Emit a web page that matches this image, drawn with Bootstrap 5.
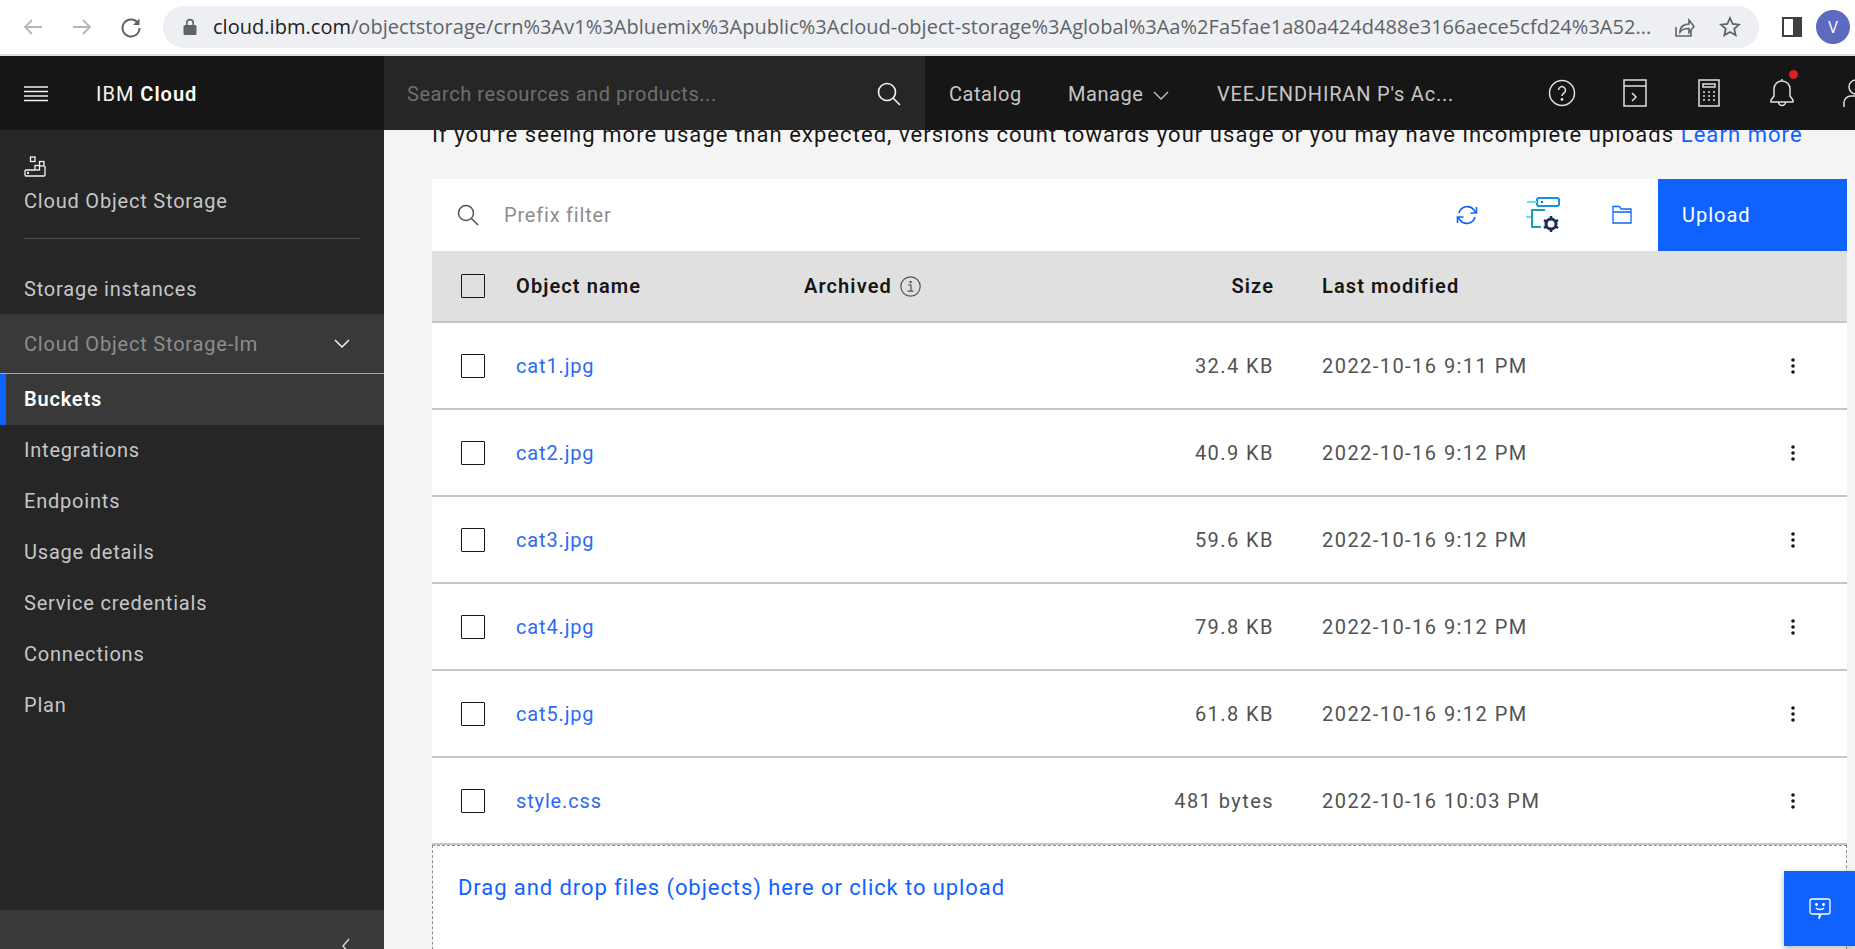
<!DOCTYPE html>
<html lang="en">
<head>
<meta charset="utf-8">
<title>IBM Cloud</title>
<link href="https://cdn.jsdelivr.net/npm/bootstrap@5.3.0/dist/css/bootstrap.min.css" rel="stylesheet">
<style>
html,body{height:100%;}
body{width:1855px;height:949px;overflow:hidden;background:#f4f4f4;font-family:"Open Sans","Liberation Sans",sans-serif;font-size:20px;color:#161616;position:relative;}
.plex{font-family:"Roboto","Liberation Sans",sans-serif;letter-spacing:.8px;}
.chromebar{height:56px;background:#fff;border-bottom:2px solid #dadce0;}
.navicon{width:49px;display:flex;justify-content:center;}
.omni{width:1596px;height:42px;margin-left:8px;background:#edeff2;border-radius:21px;font-family:"Open Sans",sans-serif;font-size:20px;color:#5f6368;white-space:nowrap;overflow:hidden;padding:0 18px 0 20px;}
.omni b{font-weight:400;color:#202124;}
.urltxt{margin-left:16px;flex:1;letter-spacing:.03px;}
.sharei{margin-left:12px;flex:none;}
.stari{margin-left:24px;flex:none;}
.paneli{margin-left:23px;flex:none;}
.avatar{width:34px;height:34px;border-radius:50%;background:#5c6bc0;color:#fff;font-size:16px;flex:none;margin-left:14px;}
.ibmhead{height:74px;background:#161616;color:#c6c6c6;}
.headleft{width:384px;padding-left:24px;padding-top:2px;flex:none;}
.brand{margin-left:48px;color:#f4f4f4;font-size:20px;letter-spacing:1px;}
.brand b{font-weight:600;color:#fff;}
.searchbox{width:541px;flex:none;background:#262626;color:#6f6f6f;padding:2px 24px 0 23px;font-size:20px;letter-spacing:.55px;}
.toplink{font-size:20px;color:#c6c6c6;white-space:nowrap;padding-top:2px;letter-spacing:.55px;flex:none;}
.lnk1{margin-left:24px;width:119px;}
.lnk2{width:149px;}
.lnk3{width:300px;overflow:hidden;letter-spacing:.8px;}
.hicon{width:73.5px;display:flex;justify-content:center;position:relative;flex:none;}
.dot{position:absolute;width:9px;height:9px;border-radius:50%;background:#da1e28;top:-8px;left:43px;}
.pagebody{height:819px;}
.sidenav{width:384px;background:#262626;color:#c6c6c6;flex:none;position:relative;}
.sidehead{padding:20px 24px 0;height:108px;}
.sidehead .ttl{margin-top:6px;line-height:30px;}
.sidediv{height:1px;background:#525252;margin:0 24px;}
.sitem{height:51px;padding-left:24px;line-height:51px;}
.sitem1{height:75px;line-height:26px;padding-top:37px;}
.sgroup{height:60px;background:#393939;color:#8d8d8d;padding:0 24px;border-bottom:1px solid #a8a8a8;}
.sgroupchev{margin-right:10px;}
.sactive{background:#393939;color:#fff;font-weight:600;border-left:6px solid #0f62fe;padding-left:18px;height:51px;line-height:50px;}
.collapsebar{position:absolute;left:0;right:0;bottom:0;height:39px;background:#393939;}
.collapsebar svg{position:absolute;left:341px;top:28px;}
.mainpane{flex:1;padding:0 8px 0 48px;overflow:hidden;}
.noticeline{height:49px;padding-bottom:29px;white-space:nowrap;overflow:hidden;line-height:30px;font-size:22px;letter-spacing:1.06px;}
.noticeline a,.linky{color:#0f62fe;text-decoration:none;}
.filelink{color:#2c6bf0;text-decoration:none;letter-spacing:.85px;}
.toolrow{height:72px;background:#fff;}
.searchi{margin-left:25px;}
.prefix{color:#8d8d8d;margin-left:25px;}
.refreshi{margin-right:2px;}
.clusteri{margin-left:46px;}
.folderi{margin-left:52px;}
.uploadbtn{margin-left:26px;width:189px;height:72px;background:#0f62fe;color:#fff;border:0;border-radius:0;text-align:left;padding:0 0 0 24px;font-size:20px;letter-spacing:1px;}
.uploadbtn:hover{background:#0f62fe;color:#fff;}
.objtable{table-layout:fixed;width:1415px;margin:0;--bs-table-bg:#fff;border-collapse:collapse;}
.objtable th{background:#e0e0e0;height:71px;border-bottom:2px solid #c6c6c6;font-weight:600;color:#161616;padding:0;vertical-align:middle;letter-spacing:1.1px;}
.objtable td{height:87px;padding:0;vertical-align:middle;border-bottom:2px solid #c6c6c6;color:#525252;letter-spacing:1.45px;}
.cw1{width:84px;}.cw2{width:288px;}.cw3{width:240px;}.cw4{width:278px;}.cw5{width:438px;}.cw6{width:87px;}
.boxmark{display:block;width:24px;height:24px;border:1.5px solid #161616;border-radius:1px;margin-left:29px;}
.boxhead{background:#e0e0e0;}
.rgt{text-align:right;padding-right:48px !important;}
.dropzone{height:120px;background:#fff;border:1px dashed #8d8d8d;border-bottom:0;padding:27px 0 0 25px;line-height:30px;font-size:22px;letter-spacing:.92px;}
.fbbtn{position:absolute;right:0;bottom:3px;width:71px;height:75px;background:#0f62fe;box-shadow:0 2px 6px rgba(0,0,0,.3);}
.kebab{display:block;margin-left:31px;}
</style>
</head>
<body>
<div class="chromebar d-flex align-items-center ps-2">
  <div class="navicon"><svg width="22" height="22" viewBox="0 0 22 22" fill="none" stroke="#b4b7bb" stroke-width="1.8"><path d="M20 11H3M10 4l-7 7 7 7"/></svg></div>
  <div class="navicon"><svg width="22" height="22" viewBox="0 0 22 22" fill="none" stroke="#b4b7bb" stroke-width="1.8"><path d="M2 11h17M12 4l7 7-7 7"/></svg></div>
  <div class="navicon"><svg width="24" height="24" viewBox="0 0 24 24" fill="none" stroke="#5f6368" stroke-width="2"><path d="M19.5 9A8.5 8.5 0 1 0 20.5 13"/><path d="M20.5 3.5V10h-6.5" fill="#5f6368" stroke="none"/></svg></div>
  <div class="omni d-flex align-items-center">
    <svg class="flex-none" width="14" height="18" viewBox="0 0 14 18" fill="#5f6368"><path d="M2 7h10a1.5 1.5 0 0 1 1.5 1.5v7A1.5 1.5 0 0 1 12 17H2a1.5 1.5 0 0 1-1.5-1.5v-7A1.5 1.5 0 0 1 2 7z"/><path d="M3.8 7V4.800a3.200 3.200 0 0 1 6.400 0V7" fill="none" stroke="#5f6368" stroke-width="1.6"/></svg>
    <span class="urltxt"><b>cloud.ibm.com</b>/objectstorage/crn%3Av1%3Abluemix%3Apublic%3Acloud-object-storage%3Aglobal%3Aa%2Fa5fae1a80a424d488e3166aece5cfd24%3A52...</span>
    <svg class="sharei" width="22" height="22" viewBox="0 0 22 22" fill="none" stroke="#5f6368" stroke-width="1.6"><path d="M3 11v9h15v-5"/><path d="M7 16c0-6 5-8 9-8V4l5 6.500-5 6v-4c-4 0-7 .5-9 3.500z"/></svg>
    <svg class="stari" width="22" height="22" viewBox="0 0 22 22" fill="none" stroke="#5f6368" stroke-width="1.8"><path d="M11 2l2.700 6 6.300.6-4.800 4.200 1.400 6.400L11 16l-5.600 3.200 1.400-6.400L2 8.600 8.300 8z"/></svg>
  </div>
  <svg class="paneli" width="20" height="20" viewBox="0 0 20 20"><rect x="1" y="1" width="18" height="18" fill="none" stroke="#3c4043" stroke-width="2"/><rect x="11" y="1" width="8" height="18" fill="#3c4043"/></svg>
  <div class="avatar d-flex align-items-center justify-content-center">V</div>
</div>

<div class="ibmhead d-flex align-items-stretch plex">
  <div class="headleft d-flex align-items-center">
    <svg width="24" height="16" viewBox="0 0 24 16" stroke="#f4f4f4" stroke-width="1.500"><path d="M0 1h24M0 5.500h24M0 10h24M0 14.500h24"/></svg>
    <span class="brand">IBM <b>Cloud</b></span>
  </div>
  <div class="searchbox d-flex align-items-center justify-content-between">
    <span>Search resources and products...</span>
    <svg width="24" height="24" viewBox="0 0 24 24" fill="none" stroke="#f4f4f4" stroke-width="1.600"><circle cx="10" cy="10" r="8.500"/><path d="M16 16l7 7"/></svg>
  </div>
  <div class="d-flex align-items-center">
    <span class="toplink lnk1">Catalog</span>
    <span class="toplink lnk2">Manage <svg class="ms-1" width="16" height="10" viewBox="0 0 16 10" fill="none" stroke="#c6c6c6" stroke-width="1.300"><path d="M1 1l7 7 7-7"/></svg></span>
    <span class="toplink lnk3">VEEJENDHIRAN P's Ac...</span>
    <div class="hicon ms-2"><svg width="28" height="28" viewBox="0 0 28 28" fill="none" stroke="#e0e0e0" stroke-width="1.500"><circle cx="14" cy="14" r="12.500"/><path d="M10.500 11a3.500 3.500 0 1 1 5.500 3c-1.300.8-2 1.500-2 3"/><circle cx="14" cy="20.500" r=".7"/></svg></div>
    <div class="hicon"><svg width="26" height="28" viewBox="0 0 26 28" fill="none" stroke="#e0e0e0" stroke-width="1.500"><rect x="2" y="1" width="22" height="26"/><path d="M2 7h22M10 14l4 4-4 4"/></svg></div>
    <div class="hicon"><svg width="24" height="28" viewBox="0 0 24 28" fill="none" stroke="#e0e0e0" stroke-width="1.500"><rect x="2" y="1" width="20" height="26"/><rect x="6" y="5" width="12" height="3"/><path d="M6 13h2M11 13h2M16 13h2M6 17h2M11 17h2M16 17h2M6 21h2M11 21h2M16 21h2"/></svg></div>
    <div class="hicon"><svg width="26" height="30" viewBox="0 0 26 30" fill="none" stroke="#e0e0e0" stroke-width="1.500"><path d="M13 3a8 8 0 0 0-8 8v7l-3 4v2h22v-2l-3-4v-7a8 8 0 0 0-8-8zM13 1v2M9.500 24a3.500 3.500 0 0 0 7 0"/></svg><span class="dot"></span></div>
    <div class="hicon"><svg width="28" height="30" viewBox="0 0 28 30" fill="none" stroke="#e0e0e0" stroke-width="1.500"><circle cx="14" cy="9" r="7"/><path d="M2 29v-4a7 7 0 0 1 7-7h10a7 7 0 0 1 7 7v4"/></svg></div>
  </div>
</div>

<div class="pagebody d-flex plex">
  <nav class="sidenav">
    <div class="sidehead">
      <svg width="22" height="21" viewBox="0 0 22 21" fill="none" stroke="#f4f4f4" stroke-width="1.300"><rect x="6.500" y="1" width="4.500" height="4.500"/><rect x="15.500" y="5.500" width="4.500" height="4.500"/><rect x="11" y="9.500" width="4.500" height="4.500"/><path d="M11 14H2a1 1 0 0 0-1 1v4a1 1 0 0 0 1 1h18a1 1 0 0 0 1-1v-9"/><circle cx="4" cy="17" r=".5"/></svg>
      <div class="ttl">Cloud Object Storage</div>
    </div>
    <div class="sidediv"></div>
    <div class="sitem sitem1">Storage instances</div>
    <div class="sgroup d-flex align-items-center justify-content-between">
      <span>Cloud Object Storage-lm</span>
      <svg class="sgroupchev" width="16" height="10" viewBox="0 0 16 10" fill="none" stroke="#f4f4f4" stroke-width="1.500"><path d="M1 1l7 7 7-7"/></svg>
    </div>
    <div class="sitem sactive">Buckets</div>
    <div class="sitem">Integrations</div>
    <div class="sitem">Endpoints</div>
    <div class="sitem">Usage details</div>
    <div class="sitem">Service credentials</div>
    <div class="sitem">Connections</div>
    <div class="sitem">Plan</div>
    <div class="collapsebar"><svg width="10" height="16" viewBox="0 0 10 16" fill="none" stroke="#e0e0e0" stroke-width="1.300"><path d="M8 1L2 8l6 7"/></svg></div>
  </nav>
  <main class="mainpane">
    <div class="noticeline d-flex align-items-end">
      <span>If you're seeing more usage than expected, versions count towards your usage or you may have incomplete uploads <a href="#">Learn more</a></span>
    </div>
    <div class="toolrow d-flex align-items-center">
      <svg class="searchi" width="22" height="22" viewBox="0 0 22 22" fill="none" stroke="#525252" stroke-width="1.500"><circle cx="9" cy="9" r="7.500"/><path d="M14.500 14.500l6.500 6.500"/></svg>
      <span class="prefix flex-grow-1">Prefix filter</span>
      <svg class="refreshi" width="22" height="22" viewBox="0 0 22 22" fill="none" stroke="#0f62fe" stroke-width="1.600"><path d="M3 9a8.500 8.500 0 0 1 15-3l2 2.500M19 13a8.500 8.500 0 0 1-15 3l-2-2.500"/><path d="M20.500 3v6h-6M1.500 19v-6h6"/></svg>
      <svg class="clusteri" width="34" height="36" viewBox="0 0 34 36" fill="none"><rect x="11" y="1" width="22" height="8" rx="2" stroke="#1192e8" stroke-width="2"/><circle cx="16" cy="5" r="1" fill="#1c2a5e"/><path d="M1 5h10M0 20h5" stroke="#6fdcf0" stroke-width="2"/><path d="M19 13H6v17h9" stroke="#12a3b4" stroke-width="2"/><circle cx="25" cy="27" r="5" stroke="#1c2a5e" stroke-width="3"/><path d="M25 19v3M25 32v3M18 23l3 2M29 29l3 2M18 31l3-2M29 25l3-2" stroke="#1c2a5e" stroke-width="2.500"/></svg>
      <svg class="folderi" width="20" height="20" viewBox="0 0 20 20" fill="none" stroke="#0f62fe" stroke-width="1.300"><path d="M1 7v11h18V4H9L7.500 1.500H1V7h18"/></svg>
      <button class="btn uploadbtn plex" type="button">Upload</button>
    </div>
    <table class="table objtable">
      <colgroup><col class="cw1"><col class="cw2"><col class="cw3"><col class="cw4"><col class="cw5"><col class="cw6"></colgroup>
      <thead>
        <tr>
          <th><span class="boxmark boxhead"></span></th>
          <th>Object name</th>
          <th><span class="d-inline-flex align-items-center gap-2">Archived <svg width="21" height="21" viewBox="0 0 21 21" fill="none" stroke="#525252" stroke-width="1.200"><circle cx="10.500" cy="10.500" r="9.700"/><path d="M8 9h3v6M7.500 15.200h6"/><circle cx="10.500" cy="6" r=".6"/></svg></span></th>
          <th class="rgt">Size</th>
          <th>Last modified</th>
          <th></th>
        </tr>
      </thead>
      <tbody>
        <tr><td><span class="boxmark"></span></td><td><a class="filelink" href="#">cat1.jpg</a></td><td></td><td class="rgt">32.4 KB</td><td>2022-10-16 9:11 PM</td><td><svg class="kebab" width="4" height="16" viewBox="0 0 4 16" fill="#161616"><circle cx="2" cy="2" r="1.800"/><circle cx="2" cy="8" r="1.800"/><circle cx="2" cy="14" r="1.800"/></svg></td></tr>
        <tr><td><span class="boxmark"></span></td><td><a class="filelink" href="#">cat2.jpg</a></td><td></td><td class="rgt">40.9 KB</td><td>2022-10-16 9:12 PM</td><td><svg class="kebab" width="4" height="16" viewBox="0 0 4 16" fill="#161616"><circle cx="2" cy="2" r="1.800"/><circle cx="2" cy="8" r="1.800"/><circle cx="2" cy="14" r="1.800"/></svg></td></tr>
        <tr><td><span class="boxmark"></span></td><td><a class="filelink" href="#">cat3.jpg</a></td><td></td><td class="rgt">59.6 KB</td><td>2022-10-16 9:12 PM</td><td><svg class="kebab" width="4" height="16" viewBox="0 0 4 16" fill="#161616"><circle cx="2" cy="2" r="1.800"/><circle cx="2" cy="8" r="1.800"/><circle cx="2" cy="14" r="1.800"/></svg></td></tr>
        <tr><td><span class="boxmark"></span></td><td><a class="filelink" href="#">cat4.jpg</a></td><td></td><td class="rgt">79.8 KB</td><td>2022-10-16 9:12 PM</td><td><svg class="kebab" width="4" height="16" viewBox="0 0 4 16" fill="#161616"><circle cx="2" cy="2" r="1.800"/><circle cx="2" cy="8" r="1.800"/><circle cx="2" cy="14" r="1.800"/></svg></td></tr>
        <tr><td><span class="boxmark"></span></td><td><a class="filelink" href="#">cat5.jpg</a></td><td></td><td class="rgt">61.8 KB</td><td>2022-10-16 9:12 PM</td><td><svg class="kebab" width="4" height="16" viewBox="0 0 4 16" fill="#161616"><circle cx="2" cy="2" r="1.800"/><circle cx="2" cy="8" r="1.800"/><circle cx="2" cy="14" r="1.800"/></svg></td></tr>
        <tr><td><span class="boxmark"></span></td><td><a class="filelink" href="#">style.css</a></td><td></td><td class="rgt">481 bytes</td><td>2022-10-16 10:03 PM</td><td><svg class="kebab" width="4" height="16" viewBox="0 0 4 16" fill="#161616"><circle cx="2" cy="2" r="1.800"/><circle cx="2" cy="8" r="1.800"/><circle cx="2" cy="14" r="1.800"/></svg></td></tr>
      </tbody>
    </table>
    <div class="dropzone"><a class="linky" href="#">Drag and drop files (objects) here or click to upload</a></div>
  </main>
</div>
<div class="fbbtn d-flex align-items-center justify-content-center">
  <svg width="22" height="22" viewBox="0 0 22 22" fill="none" stroke="#fff" stroke-width="1.300"><path d="M3 1h16a2 2 0 0 1 2 2v11a2 2 0 0 1-2 2h-7l-2 5 .5-5H3a2 2 0 0 1-2-2V3a2 2 0 0 1 2-2z"/><path d="M7 10c1.500 2 6.500 2 8 0"/><circle cx="7.500" cy="6.500" r=".8" fill="#fff"/><circle cx="14.500" cy="6.500" r=".8" fill="#fff"/></svg>
</div>
<script src="https://cdn.jsdelivr.net/npm/bootstrap@5.3.0/dist/js/bootstrap.bundle.min.js"></script>
</body>
</html>
